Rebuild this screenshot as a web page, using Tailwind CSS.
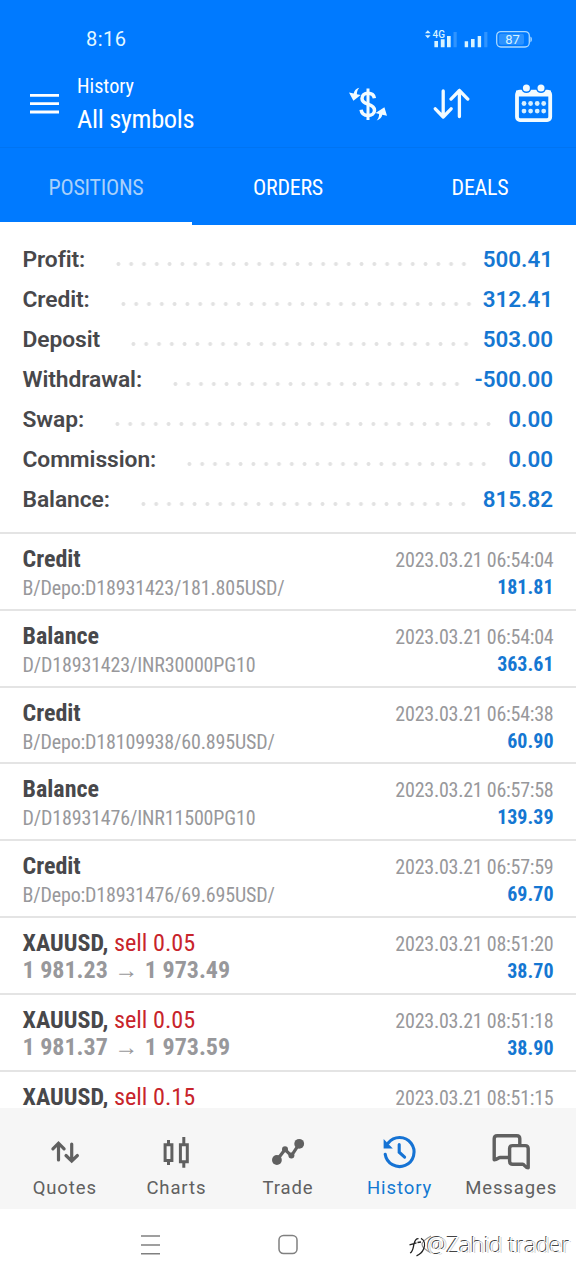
<!DOCTYPE html>
<html lang="en">
<head>
  <meta charset="UTF-8" />
  <meta name="viewport" content="width=device-width, initial-scale=1.0"/>
  <title>History - All symbols</title>
  <script src="https://cdn.jsdelivr.net/npm/@tailwindcss/browser@4"></script>
</head>
<body class="bg-white">
  <div class="relative w-[576px] h-[1280px] overflow-hidden flex flex-col bg-white font-[Roboto,sans-serif]">

    <!-- Header -->
    <header class="h-[225px] shrink-0 bg-[#007aff] text-white flex flex-col">
      <!-- Status bar -->
      <div class="h-[60px] shrink-0 pt-[18px] pl-[86px] pr-[42px] flex items-center justify-between">
        <span class="text-[20px] font-normal tracking-[0.5px] text-[#e4f8ff]">8:16</span>
        <svg class="w-[110px] h-[20px]" viewBox="424 28 110 20" fill="#d8f3ff">
          <path d="M425 32.3l2.8-3 2.8 3zM425 34.3l2.8 3 2.8-3z"/>
          <text x="432.6" y="37.4" font-size="11" font-weight="500" textLength="12.4" lengthAdjust="spacingAndGlyphs">4G</text>
          <path d="M434.4 40h3.6v6.3h-3.6zM440.8 38.3h3.8v8h-3.8zM447 35h3.7v11.3H447z"/>
          <path opacity=".22" d="M453.5 31h3.2v15.3h-3.2zM484.2 31h3.2v15.3h-3.2z"/>
          <path d="M464.7 40.3h3.4v6h-3.4zM471 38h3.6v8.3H471zM477.7 35h3.4v11.3h-3.4z"/>
          <rect x="496.7" y="30.6" width="32.6" height="15.4" rx="4.2" fill="none" stroke="#a9d8ff" stroke-width="1.3"/>
          <rect x="499" y="32.8" width="25" height="11" rx="2" opacity=".2"/>
          <path d="M530.4 35.6c2 .6 2 5 0 5.8z" fill="#a9d8ff"/>
          <text x="512.6" y="43.2" font-size="13" text-anchor="middle">87</text>
        </svg>
      </div>

      <!-- Title bar -->
      <div class="h-[88px] shrink-0 border-b border-[#0074f2] pl-[30px] pr-[22px] flex items-center">
        <svg class="w-[30px] h-[20px]" viewBox="0 0 30 20" fill="#fff">
          <path d="M0 0h29v2.8H0zM0 8.3h29v2.8H0zM0 16.6h29v2.8H0z"/>
        </svg>
        <div class="ml-[17px] -mt-[3px] flex-1 font-stretch-75%">
          <div class="text-[20.2px] leading-[32px]">History</div>
          <div class="text-[26.5px] leading-[33px] tracking-[-0.35px]">All symbols</div>
        </div>
        <div class="flex items-center gap-[44px]">
          <svg class="w-[40px] h-[40px]" viewBox="348 83 40 40" fill="none" stroke="#f2fbff">
            <path d="M368 87.5v31.500" stroke-width="3"/>
            <path d="M374.400 97.200c-.6-3.200-3-4.900-6.400-4.900-3.500 0-6 1.900-6 5.100 0 3.400 2.600 4.600 6 5.700 3.700 1.200 6.500 2.500 6.500 6.100s-3 5.300-6.500 5.300c-3.800 0-6.400-2.100-6.900-5.700" stroke-width="3.500"/>
            <path d="M359.300 86.800c-3.200.8-5 2.800-5.600 5.600l-4.700-1 4.400 8.300 7.300-5.700-3.800-.8c0-2.400.6-4.400 2.400-6.400z" fill="#f2fbff" stroke="none"/>
            <path d="M376.700 119.400c3.200-.8 5-2.800 5.600-5.600l4.700 1-2.600-8.500-8.900 5.700 3.600.9c0 2.400-.7 4.500-2.400 6.500z" fill="#f2fbff" stroke="none"/>
          </svg>
          <svg class="w-[38px] h-[40px]" viewBox="432 83.5 38 40" fill="none" stroke="#f2fbff" stroke-width="3.300" stroke-linecap="round" stroke-linejoin="round">
            <path d="M443.200 90.500v26M435.300 108.300l7.900 8.200 7.900-8.200M459.400 116v-26M451 98.600l8.400-8.600 8.400 8.600"/>
          </svg>
          <svg class="w-[40px] h-[40px]" viewBox="514 83.5 40 40">
            <rect x="517" y="91.200" width="33.200" height="28.400" rx="3" fill="none" stroke="#f2fbff" stroke-width="3.800"/>
            <path d="M516 90h35v6h-35z" fill="#f2fbff"/>
            <circle cx="526.400" cy="87.600" r="5" fill="#007aff"/>
            <circle cx="541" cy="87.600" r="5" fill="#007aff"/>
            <circle cx="526.400" cy="87.600" r="3.500" fill="#f2fbff"/>
            <circle cx="541" cy="87.600" r="3.500" fill="#f2fbff"/>
            <g fill="#d6efff">
              <circle cx="524" cy="103" r="2.400"/><circle cx="530.600" cy="103" r="2.400"/><circle cx="537.200" cy="103" r="2.400"/><circle cx="543.700" cy="103" r="2.400"/>
              <circle cx="524" cy="110.600" r="2.400"/><circle cx="530.600" cy="110.600" r="2.400"/><circle cx="537.200" cy="110.600" r="2.400"/><circle cx="543.700" cy="110.600" r="2.400"/>
            </g>
          </svg>
        </div>
      </div>

      <!-- Tabs -->
      <nav class="flex-1 grid grid-cols-3 text-center text-[22px] tracking-[-0.25px] leading-[80px] font-stretch-75%">
        <div class="h-[77px] border-b-3 border-white text-[#a9d0fa]">POSITIONS</div>
        <div>ORDERS</div>
        <div>DEALS</div>
      </nav>
    </header>

    <!-- Account summary -->
    <section id="summary" class="shrink-0 pt-[15px] pb-[12px] pl-[22.5px] pr-[23px]"></section>

    <!-- Deals list -->
    <section id="deals" class="flex-1 min-h-0 overflow-hidden"></section>

    <!-- Bottom navigation -->
    <nav class="h-[101px] shrink-0 px-[9px] bg-[#f6f6f6] grid grid-cols-5 text-center text-[18.5px] tracking-[0.9px] text-[#606060]">
      <div class="pt-[24px] flex flex-col items-center">
        <svg class="w-[40px] h-[40px]" viewBox="45 1132 40 40" fill="none" stroke="#606060" stroke-width="3.2">
          <path d="M58.5 1160v-16.5M52.9 1148.8l5.6-5.6 5.6 5.6M71.7 1144v16.5M66 1155.5l5.7 5.6 5.7-5.6" stroke-linecap="round"/>
        </svg>
        <span class="leading-[32px]">Quotes</span>
      </div>
      <div class="pt-[24px] flex flex-col items-center">
        <svg class="w-[40px] h-[40px]" viewBox="156.5 1132 40 40" fill="none" stroke="#606060" stroke-width="3">
          <path d="M165.6 1144.7h6.8v15.8h-6.8zM169 1140v4M169 1161v4M180.9 1144.7h6.9v17h-6.9zM184.3 1137v7M184.3 1162v5.7"/>
        </svg>
        <span class="leading-[32px]">Charts</span>
      </div>
      <div class="pt-[24px] flex flex-col items-center">
        <svg class="w-[40px] h-[40px]" viewBox="268 1132 40 40" fill="#606060">
          <path d="M277 1160l8-10.5 6.4 6.3 7.8-12" fill="none" stroke="#606060" stroke-width="3.2"/>
          <circle cx="276.9" cy="1160" r="4.9"/><circle cx="299.2" cy="1143.8" r="4.9"/>
          <circle cx="285" cy="1149.3" r="3"/><circle cx="291.4" cy="1155.5" r="3"/>
        </svg>
        <span class="leading-[32px]">Trade</span>
      </div>
      <div class="pt-[24px] flex flex-col items-center text-[#1279d2]">
        <svg class="w-[40px] h-[40px]" viewBox="380 1132 40 40" fill="none" stroke="#1673d4" stroke-width="3.1">
          <path d="M385.2 1154.2a14.5 14.5 0 1 0 3-11.2M399.2 1144.6v7.6l5.4 5" stroke-linecap="round"/>
          <path d="M383.6 1139v9.4h9.2z" fill="#1673d4" stroke="none"/>
        </svg>
        <span class="leading-[32px]">History</span>
      </div>
      <div class="pt-[24px] flex flex-col items-center">
        <svg class="w-[40px] h-[40px]" viewBox="491 1132 40 40" fill="none" stroke="#606060" stroke-width="3.4" stroke-linejoin="round">
          <path d="M508 1157.5h-8c-1.500 0-2.500 2-5.800 2.200V1138.700q0-3 3-3h19.600q3 0 3 3v5.500"/>
          <path d="M512.6 1145.600h12.600q3 0 3 3v19.200c-3.200 0-3.600-3.500-5.500-3.500h-10.100q-3 0-3-3v-12.700q0-3 3-3z" fill="#f6f6f6"/>
        </svg>
        <span class="leading-[32px]">Messages</span>
      </div>
    </nav>

    <!-- System buttons -->
    <div class="h-[71px] shrink-0 pl-[141px] flex">
      <svg class="mt-[26px] w-[20px] h-[20px]" viewBox="0 0 20 20" fill="none" stroke="#808080" stroke-width="1.5">
        <path d="M0 1h19M0 10h19M0 18.8h19"/>
      </svg>
      <svg class="mt-[25px] ml-[117px] w-[20px] h-[21px]" viewBox="0 0 20 21" fill="none" stroke="#808080" stroke-width="1.5">
        <rect x="1" y="1.5" width="18" height="18" rx="4.5"/>
      </svg>
      <svg class="mt-[25px] ml-[122px] w-[20px] h-[21px]" viewBox="0 0 20 21" fill="none" stroke="#999" stroke-width="1.2">
        <path d="M11 2q-9 5-9 8.500t9 8.500"/>
      </svg>
    </div>

    <!-- Watermark -->
    <div class="absolute left-[408px] top-[1230px] flex items-center whitespace-nowrap">
      <svg class="w-[20px] h-[28px]" viewBox="0 0 20 28" fill="none" stroke="#222" stroke-width="1.3">
        <path d="M2 23c3-1 3-5 4-9 .8-3.500 2-5.500 4.500-5.300M1.500 14.800l7-2M13 8.300c3.500 1.700 4.500 6 2.500 11-1.200 3-3.500 5-7 6.500M9.500 12.500l3.500-.5"/>
      </svg>
      <span class="-ml-px font-['Open_Sans',sans-serif] font-light text-[22px] tracking-[0.1px] leading-[28px] text-white [text-shadow:-1px_-1px_0_#444,1px_0_0_#ccc]">@Zahid trader</span>
    </div>
  </div>

  <script>
    const summary = [
      { label: "Profit:",     value: "500.41",  dots: 28 },
      { label: "Credit:",     value: "312.41",  dots: 28 },
      { label: "Deposit",     value: "503.00",  dots: 27 },
      { label: "Withdrawal:", value: "-500.00", dots: 23 },
      { label: "Swap:",       value: "0.00",    dots: 30 },
      { label: "Commission:", value: "0.00",    dots: 24 },
      { label: "Balance:",    value: "815.82",  dots: 26 },
    ];

    const deals = [
      { title: "Credit",  note: "B/Depo:D18931423/181.805USD/", time: "2023.03.21 06:54:04", value: "181.81" },
      { title: "Balance", note: "D/D18931423/INR30000PG10",     time: "2023.03.21 06:54:04", value: "363.61" },
      { title: "Credit",  note: "B/Depo:D18109938/60.895USD/",  time: "2023.03.21 06:54:38", value: "60.90" },
      { title: "Balance", note: "D/D18931476/INR11500PG10",     time: "2023.03.21 06:57:58", value: "139.39" },
      { title: "Credit",  note: "B/Depo:D18931476/69.695USD/",  time: "2023.03.21 06:57:59", value: "69.70" },
      { title: "XAUUSD,", side: "sell 0.05", from: "1 981.23", to: "1 973.49", time: "2023.03.21 08:51:20", value: "38.70" },
      { title: "XAUUSD,", side: "sell 0.05", from: "1 981.37", to: "1 973.59", time: "2023.03.21 08:51:18", value: "38.90" },
      { title: "XAUUSD,", side: "sell 0.15", from: "", to: "", time: "2023.03.21 08:51:15", value: "" },
    ];

    const DOT_STEP = 12.8;

    document.getElementById("summary").innerHTML = summary.map(r => `
      <div class="h-[40px] flex items-center font-semibold">
        <span class="text-[22.8px] tracking-[-0.08px] text-[#48484b]">${r.label}</span>
        <span class="ml-[27px] mt-[7px] h-[6px] bg-[radial-gradient(circle,#e2e2e2_1.6px,transparent_2.3px)] bg-[length:12.8px_6px]" style="width:${r.dots * DOT_STEP}px"></span>
        <span class="ml-auto text-[22.4px] text-[#1577d2]">${r.value}</span>
      </div>`).join("");

    document.getElementById("deals").innerHTML = deals.map(d => `
      <div class="h-[76.8px] border-t-2 border-[#e4e4e4] pl-[22.5px] pr-[22.5px] flex justify-between whitespace-nowrap font-stretch-75%">
        <div class="pt-[11px] text-[24px] leading-[28px] font-bold text-[#48484b]">
          <div>${d.title}${d.side ? ` <span class="font-normal text-[24.2px] text-[#c8242b]">${d.side}</span>` : ""}</div>
          ${d.note
            ? `<div class="text-[20px] tracking-[-0.16px] leading-[30px] font-normal text-[#98989b]">${d.note}</div>`
            : d.from ? `<div class="leading-[27px] text-[#98989b]">${d.from} <span class="mx-px font-normal">→</span> ${d.to}</div>` : ""}
        </div>
        <div class="pt-[12px] text-right text-[20px] leading-[28px]">
          <div class="font-normal tracking-[-0.24px] text-[#98989b]">${d.time}</div>
          <div class="font-bold leading-[27px] text-[#1577d2]">${d.value}</div>
        </div>
      </div>`).join("");
  </script>
</body>
</html>
